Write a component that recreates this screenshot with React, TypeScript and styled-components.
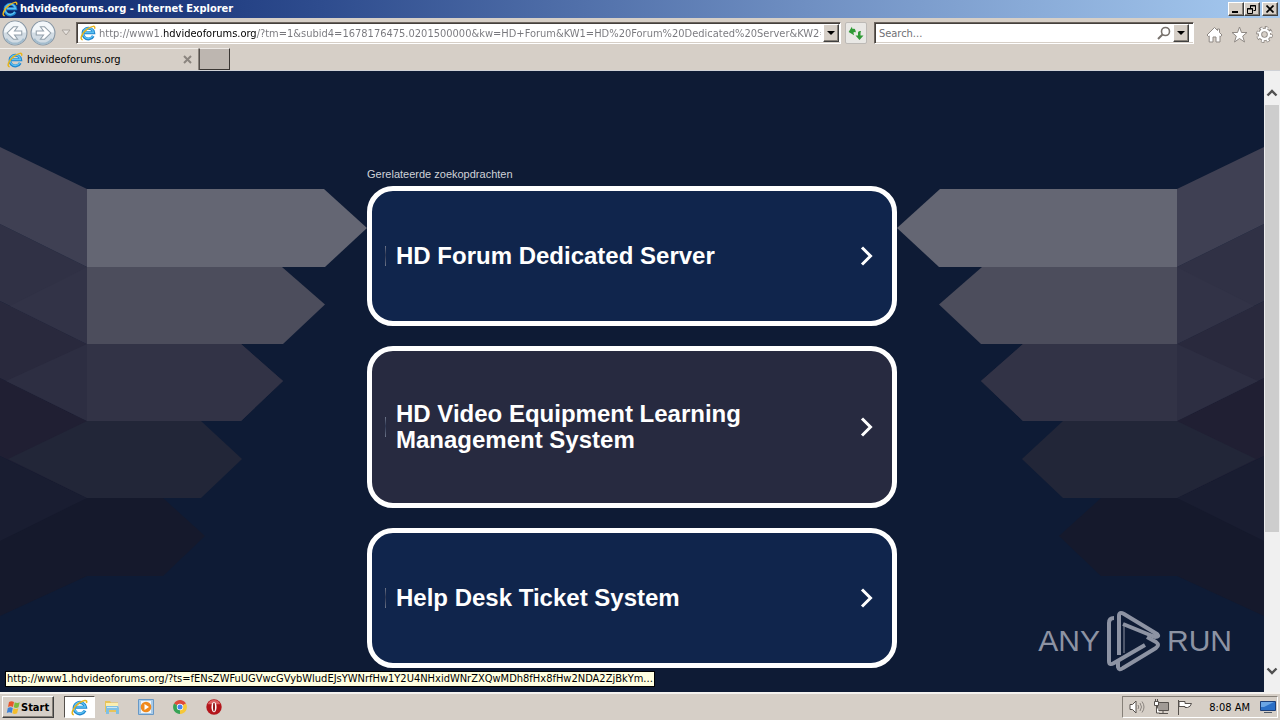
import React from "react";
import styled, { createGlobalStyle, css } from "styled-components";

const GlobalStyle = createGlobalStyle`
  * { box-sizing: border-box; }
  body {
    margin: 0;
    background: #0e1b35;
    font-family: "DejaVu Sans Condensed", "DejaVu Sans", sans-serif;
    font-size: 11px;
    color: #000;
  }
  button, input { font: inherit; margin: 0; padding: 0; border: 0; background: none; }
  svg { display: block; flex: none; }
`;

const raised = css`
  background: #d6cfc7;
  border: 1px solid;
  border-color: #fff #404040 #404040 #fff;
  box-shadow: inset -1px -1px 0 #868078;
`;

const Desktop = styled.div`
  display: flex;
  flex-direction: column;
  height: 100vh;
  overflow: hidden;
`;

const TitleBar = styled.header`
  display: flex;
  align-items: center;
  gap: 2px;
  height: 18px;
  flex: none;
  padding: 0 2px;
  color: #fff;
  font-weight: bold;
  background: linear-gradient(90deg, #0b256b, #2e4c8e 25%, #6f8fc2 63%, #a6caf0);
`;

const Title = styled.h1`
  flex: 1;
  margin: 0;
  font-size: 11px;
  line-height: 18px;
  white-space: nowrap;
`;

const WindowButtons = styled.div`
  display: flex;
`;

const WindowButton = styled.button<{ $apart?: boolean }>`
  ${raised}
  display: flex;
  align-items: center;
  justify-content: center;
  width: 16px;
  height: 14px;
  margin-left: ${(p) => (p.$apart ? 2 : 0)}px;
`;

const NavBar = styled.nav`
  display: flex;
  align-items: center;
  height: 30px;
  flex: none;
  padding: 0 7px 0 2px;
  background: #d6cfc7;
`;

const HistoryButtons = styled.div`
  display: flex;
  align-items: center;
  gap: 2px;
  width: 74px;
  flex: none;
`;

const PlainButton = styled.button`
  display: flex;
  align-items: center;
  justify-content: center;
`;

const Field = styled.div<{ $grow: number; $end?: number }>`
  display: flex;
  align-items: center;
  flex: ${(p) => p.$grow} 1 0;
  min-width: 0;
  height: 22px;
  padding: 0 ${(p) => p.$end ?? 1}px 0 3px;
  background: #fff;
  border: 1px solid;
  border-color: #6b645e #fff #fff #6b645e;
  box-shadow: inset 1px 1px 0 #45403c, inset 0 -1px 0 #d6cfc7;
`;

const AddressInput = styled.input`
  flex: 1;
  min-width: 0;
  height: 18px;
  margin-left: 3px;
  color: transparent;
  background: linear-gradient(90deg, #77777c 65px, #000 65px, #000 158px, #77777c 158px);
  -webkit-background-clip: text;
  background-clip: text;
  outline: none;
`;

const SearchInput = styled.input`
  flex: 1;
  min-width: 0;
  height: 18px;
  margin-left: 1px;
  color: #707074;
  outline: none;
  &::placeholder { color: #707074; opacity: 1; }
`;

const DropButton = styled.button`
  ${raised}
  display: flex;
  align-items: center;
  justify-content: center;
  flex: none;
  width: 16px;
  height: 18px;
  margin-left: 2px;
`;

const RefreshButton = styled.button`
  display: flex;
  align-items: center;
  justify-content: center;
  flex: none;
  width: 22px;
  height: 22px;
  margin: 0 7px 0 4px;
  background: #e9e8e5;
  border: 1px solid #bdbab6;
  border-radius: 2px;
`;

const Tools = styled.div`
  display: flex;
  gap: 8px;
  margin-left: 12px;
  padding-top: 2px;
`;

const TabStrip = styled.div`
  display: flex;
  height: 23px;
  flex: none;
  background: #d6cfc7;
  border-bottom: 1px solid #cfd1d6;
`;

const Tab = styled.div`
  display: flex;
  align-items: center;
  gap: 4px;
  width: 199px;
  padding: 0 6px 0 7px;
  border-right: 1px solid #8b847d;
  border-top: 1px solid #f1eeea;
`;

const TabTitle = styled.span`
  flex: 1;
`;

const NewTab = styled.button`
  width: 31px;
  height: 22px;
  background: #bdb6b0;
  border: 1px solid;
  border-color: #eeeae6 #3a3633 #3a3633 #55504c;
`;

const Viewport = styled.main`
  position: relative;
  display: flex;
  flex: 1;
  min-height: 0;
  background: #0e1b35;
`;

const Page = styled.div`
  display: grid;
  grid-template-columns: minmax(0, 1fr) 530px minmax(0, 1fr);
  flex: 1;
  min-width: 0;
  overflow: hidden;
`;

const Art = styled.svg`
  width: 100%;
  height: 621px;
`;

const Results = styled.section`
  display: flex;
  flex-direction: column;
  gap: 20px;
  padding-top: 96px;
  font-family: "Liberation Sans", Arial, sans-serif;
`;

const Caption = styled.p`
  margin: 0 0 -15px;
  color: #d0d2d8;
  font-size: 11px;
  line-height: 14px;
`;

const Card = styled.a<{ $hover?: boolean }>`
  display: flex;
  align-items: center;
  padding: 50px 18px 50px 13px;
  background: ${(p) => (p.$hover ? "#272a40" : "#10254c")};
  border: 5px solid #fff;
  border-radius: 26px;
  color: #fff;
  text-decoration: none;
`;

const Tick = styled.i`
  width: 1px;
  height: 20px;
  margin-right: 10px;
  background: linear-gradient(#6d7589, #2c3550 45%, #6d7589);
`;

const CardText = styled.span`
  display: flex;
  align-items: center;
  flex: 1;
  min-height: 30px;
  padding-right: 60px;
  font-size: 24px;
  font-weight: bold;
  line-height: 26px;
`;

const Scrollbar = styled.div`
  display: flex;
  flex-direction: column;
  justify-content: space-between;
  width: 16px;
  flex: none;
  padding-top: 14px;
  background: #f0f0f0;
`;

const Thumb = styled.div`
  flex: 0 1 427px;
  margin: 4px 1px auto;
  background: #cdcdcd;
`;

const ScrollButton = styled(PlainButton)`
  width: 16px;
  height: 16px;
  flex: none;
  &:last-child { height: 42px; }
`;

const StatusTip = styled.output`
  position: absolute;
  left: 5px;
  bottom: 5px;
  height: 16px;
  padding: 0 1px;
  line-height: 14px;
  white-space: nowrap;
  background: #ffffe1;
  border: 1px solid #000;
`;

const Watermark = styled.div`
  position: absolute;
  right: 48px;
  bottom: 18px;
  display: flex;
  align-items: center;
  gap: 6px;
  color: #8d93a3;
  font-family: "Liberation Sans", sans-serif;
  font-size: 30px;
  line-height: 66px;
`;

const Taskbar = styled.footer`
  display: flex;
  align-items: center;
  gap: 10px;
  height: 28px;
  flex: none;
  padding: 0 2px;
  background: #d6cfc7;
  border-top: 2px solid #f4f2ef;
`;

const StartButton = styled.button`
  ${raised}
  display: flex;
  align-items: center;
  width: 52px;
  height: 22px;
  padding: 0 3px;
  font-weight: bold;
`;

const Launchers = styled.div`
  display: flex;
  flex: 1;
`;

const Launcher = styled.button<{ $active?: boolean }>`
  display: flex;
  align-items: center;
  justify-content: center;
  width: ${(p) => (p.$active ? 31 : 34)}px;
  height: 22px;
  ${(p) =>
    p.$active &&
    css`
      background: #fff;
      border: 1px solid;
      border-color: #55504c #fff #fff #55504c;
    `}
`;

const Tray = styled.div`
  display: flex;
  align-items: center;
  gap: 8px;
  height: 22px;
  padding: 0 1px 0 6px;
  border: 1px solid;
  border-color: #868078 #fff #fff #868078;
`;

const Clock = styled.time`
  margin: 0 2px 0 8px;
`;

const IELogo = ({ size = 16 }: { size?: number }) => (
  <svg width={size} height={size} viewBox="0 0 16 16" fill="none">
    <path d="M13.2 11a5.4 5.4 0 1 1 .5-3.2H4.6" stroke="#1f86cf" strokeWidth="2.9" />
    <path d="M12.9 10.8a5.2 5.2 0 1 1 .6-3.3H5" stroke="#5cc2f2" strokeWidth="1.3" />
    <path d="M2.7 14.8C-.8 14.6 2 8 7.200 4.200 11.500.9 16 .1 14.500 3.800" stroke="#e8b51c" strokeWidth="1.500" />
  </svg>
);

const RoundArrow = ({ flip }: { flip?: boolean }) => (
  <svg width="26" height="26" viewBox="0 0 25 25" fill="none">
    <circle cx="12.500" cy="12.500" r="11.500" fill="#d2dce4" stroke="#8796a4" />
    <path d="M2 12a10.500 10.500 0 0 1 21 0z" fill="#f3f7fa" />
    <path d="M4 18a10 10 0 0 0 17 0" stroke="#a3bccd" strokeWidth="2" />
    <g transform={flip ? "matrix(-1 0 0 1 25 0)" : undefined}>
      <path d="M19 10.500h-7l3-4h-4l-6 6 6 6h4l-3-4h7z" fill="#fff" stroke="#93a0ab" />
    </g>
  </svg>
);

const DownTriangle = () => (
  <svg width="8" height="4" viewBox="0 0 8 4">
    <path d="M0 0h8L4 4z" fill="#000" />
  </svg>
);

const CardChevron = () => (
  <svg width="14" height="20" viewBox="0 0 14 20" fill="none">
    <path d="M2 1.500l8.500 8.500L2 18.500" stroke="#fff" strokeWidth="3" />
  </svg>
);

const ScrollArrow = ({ down }: { down?: boolean }) => (
  <svg width="12" height="8" viewBox="0 0 12 8" fill="none">
    <path d={down ? "M1.500 1.500L6 6l4.500-4.500" : "M1.500 6.500L6 2l4.500 4.500"} stroke="#505050" strokeWidth="2.400" />
  </svg>
);

const ArrowArt = ({ mirrored }: { mirrored?: boolean }) => (
  <Art viewBox="0 71 367 621" preserveAspectRatio={mirrored ? "xMinYMin slice" : "xMaxYMin slice"} aria-hidden="true">
    <g transform={mirrored ? "matrix(-1 0 0 1 367 0)" : undefined}>
      <path d="M0 498H163L205 536 163 576H87L0 616z" fill="#15192c" />
      <path d="M0 456L87 498 0 541z" fill="#191d31" />
      <path d="M0 378L87 421V498L0 456z" fill="#201f33" />
      <path d="M87 421H201L242 459 201 498H87L8 459z" fill="#222638" />
      <path d="M0 301L87 344V421L0 378z" fill="#29293d" />
      <path d="M87 344H241L283 381 241 421H87L6 381z" fill="#2d2e42" />
      <path d="M87 344H241L283 381 241 421H87z" fill="#323346" />
      <path d="M0 224L87 267V344L0 301z" fill="#303145" />
      <path d="M87 267V344L10 306z" fill="#323347" />
      <path d="M87 267H282L325 304.500 283 344H87z" fill="#4c4d5c" />
      <path d="M0 147L87 189V267L0 224z" fill="#3f4053" />
      <path d="M87 189H324L367 228 325 267H87z" fill="#646673" />
    </g>
  </Art>
);

const AnyRunMark = () => (
  <svg width="55" height="62" viewBox="0 0 55 62" fill="none" stroke="#8d93a3" strokeWidth="4" strokeLinejoin="round">
    <path d="M8 8Q3 8 3 13V51Q3 56 8 53L39 35" />
    <path d="M13 45V6Q13 1 18 4L51 24Q54 27 49 27L17 14" />
    <path d="M18 16V43" strokeWidth="1" />
    <path d="M12 52V57Q13 61 17 58L50 38Q54 35 50 32L41 27" />
  </svg>
);

const RESULTS = [
  { text: "HD Forum Dedicated Server" },
  { text: "HD Video Equipment Learning Management System", hover: true },
  { text: "Help Desk Ticket System" },
];

export default function App() {
  return (
    <Desktop>
      <GlobalStyle />
      <TitleBar>
        <IELogo />
        <Title>hdvideoforums.org - Internet Explorer</Title>
        <WindowButtons>
          <WindowButton aria-label="Minimize">
            <svg width="10" height="8"><path d="M1 6h6v2H1z" /></svg>
          </WindowButton>
          <WindowButton aria-label="Restore">
            <svg width="10" height="9" fill="none" stroke="#000"><path d="M3.500 3V.5h5v5H6.500M3 1h6M.5 3.500h5v5h-5zM0 4h6" /></svg>
          </WindowButton>
          <WindowButton $apart aria-label="Close">
            <svg width="8" height="8" stroke="#000" strokeWidth="1.700"><path d="M.5.5l7 7M7.500.5l-7 7" /></svg>
          </WindowButton>
        </WindowButtons>
      </TitleBar>

      <NavBar>
        <HistoryButtons>
          <PlainButton aria-label="Back"><RoundArrow /></PlainButton>
          <PlainButton aria-label="Forward"><RoundArrow flip /></PlainButton>
          <PlainButton aria-label="Recent pages">
            <svg width="16" height="8" viewBox="0 0 16 8"><path d="M4 1h8L8 6z" fill="#e6e2de" stroke="#aaa49e" /></svg>
          </PlainButton>
        </HistoryButtons>
        <Field $grow={761}>
          <IELogo />
          <AddressInput
            aria-label="Address"
            defaultValue="http://www1.hdvideoforums.org/?tm=1&subid4=1678176475.0201500000&kw=HD+Forum&KW1=HD%20Forum%20Dedicated%20Server&KW2=HD"
          />
          <DropButton aria-label="Show addresses"><DownTriangle /></DropButton>
        </Field>
        <RefreshButton aria-label="Refresh">
          <svg width="16" height="16" viewBox="0 0 16 16" fill="#2f9a35">
            <path d="M5 1.500L.5 6 5 10.500V7.500h1.500Q7.500 7.500 7.500 9V5.500Q7.500 4 6 4H5z" transform="rotate(-14 5 6)" />
            <path d="M11.500 15L7.500 10.500H10V7.500Q10 6 12 6h1Q12.500 7 12.500 8.500v2h3z" />
          </svg>
        </RefreshButton>
        <Field $grow={312} $end={4}>
          <SearchInput aria-label="Search" placeholder="Search..." />
          <svg width="14" height="14" viewBox="0 0 14 14" fill="none" stroke="#77716c">
            <circle cx="8.500" cy="5.500" r="4" strokeWidth="1.600" /><path d="M5.500 8.500L1 13" strokeWidth="2" />
          </svg>
          <DropButton aria-label="Search providers"><DownTriangle /></DropButton>
        </Field>
        <Tools>
          <PlainButton aria-label="Home">
            <svg width="17" height="17" viewBox="0 0 17 17" fill="#fff" stroke="#8f8984">
              <path d="M8.500 1.500L1 9l1.500 1.500.7-.6V16H7v-5h3v5h4V9.900l.6.6L16 9l-2.500-2.500V3h-2v1.500z" />
            </svg>
          </PlainButton>
          <PlainButton aria-label="Favorites">
            <svg width="17" height="17" viewBox="0 0 17 17" fill="#fff" stroke="#8f8984">
              <path d="M8.500 1l2 5.500H16l-4.300 3.600L13.500 16l-5-3.500-5 3.500 1.800-5.900L1 6.500h5.500z" />
            </svg>
          </PlainButton>
          <PlainButton aria-label="Tools">
            <svg width="17" height="17" viewBox="0 0 17 17" fill="none">
              <circle cx="8.500" cy="8.500" r="6.700" stroke="#8f8984" strokeWidth="3.400" strokeDasharray="3.200 2.062" />
              <circle cx="8.500" cy="8.500" r="4.500" stroke="#8f8984" strokeWidth="4.200" />
              <circle cx="8.500" cy="8.500" r="6.300" stroke="#fff" strokeWidth="2.600" strokeDasharray="1.900 3.048" strokeDashoffset="-.5" />
              <circle cx="8.500" cy="8.500" r="4.500" stroke="#fff" strokeWidth="2.400" />
            </svg>
          </PlainButton>
        </Tools>
      </NavBar>

      <TabStrip>
        <Tab>
          <IELogo />
          <TabTitle>hdvideoforums.org</TabTitle>
          <PlainButton aria-label="Close tab">
            <svg width="9" height="9" stroke="#8b857f" strokeWidth="2"><path d="M1 1l7 7M8 1l-7 7" /></svg>
          </PlainButton>
        </Tab>
        <NewTab aria-label="New tab" />
      </TabStrip>

      <Viewport>
        <Page>
          <ArrowArt />
          <Results>
            <Caption>Gerelateerde zoekopdrachten</Caption>
            {RESULTS.map((r) => (
              <Card key={r.text} href="#" $hover={r.hover}>
                <Tick />
                <CardText>{r.text}</CardText>
                <CardChevron />
              </Card>
            ))}
          </Results>
          <ArrowArt mirrored />
        </Page>
        <Scrollbar>
          <ScrollButton aria-label="Scroll up"><ScrollArrow /></ScrollButton>
          <Thumb />
          <ScrollButton aria-label="Scroll down"><ScrollArrow down /></ScrollButton>
        </Scrollbar>
        <StatusTip>http://www1.hdvideoforums.org/?ts=fENsZWFuUGVwcGVybWludEJsYWNrfHw1Y2U4NHxidWNrZXQwMDh8fHx8fHw2NDA2ZjBkYm...</StatusTip>
        <Watermark>
          <span>ANY</span>
          <AnyRunMark />
          <span>RUN</span>
        </Watermark>
      </Viewport>

      <Taskbar>
        <StartButton>
          <svg width="15" height="15" viewBox="0 0 15 15">
            <path d="M3 2q2.500-1.500 5 0L7 7Q4.500 5.500 2 7z" fill="#e8562a" />
            <path d="M8.700 2.300q2.500 1.500 5 0l-1.200 5q-2.500 1.500-4.700 0z" fill="#7dbb3c" />
            <path d="M1.800 8q2.500-1.500 5 0l-1 5q-2.500-1.500-5 0z" fill="#3e82d6" />
            <path d="M7.500 8.300q2.500 1.500 4.800 0l-1.200 5q-2.500 1.500-4.700 0z" fill="#f4bd2a" />
          </svg>
          Start
        </StartButton>
        <Launchers>
          <Launcher $active aria-label="Internet Explorer"><IELogo size={17} /></Launcher>
          <Launcher aria-label="Explorer">
            <svg width="16" height="16" viewBox="0 0 16 16">
              <path d="M1 2h5l1 1.500h7V13H1z" fill="#e7c35a" /><path d="M2 4h12v6H2z" fill="#fbeeb0" />
              <path d="M2 7h12l1 2v6h-3v-4H5v4H2z" fill="#7fc0e4" /><path d="M3 8h10v1H3z" fill="#c9e8f6" />
            </svg>
          </Launcher>
          <Launcher aria-label="Media Player">
            <svg width="16" height="16" viewBox="0 0 16 16">
              <path d="M.5.5h15v15H.5z" fill="#a9cbe8" stroke="#6798c6" /><path d="M3 2h10v12H3z" fill="#f0f6fb" />
              <circle cx="8" cy="8" r="5.300" fill="#f08a1d" /><path d="M6.500 5l4.500 3-4.500 3z" fill="#fff" />
            </svg>
          </Launcher>
          <Launcher aria-label="Chrome">
            <svg width="14" height="14" viewBox="0 0 14 14">
              <path d="M7 7L1 3.500A7 7 0 0 1 13 3.500z" fill="#df4a3a" />
              <path d="M7 7L1 3.500A7 7 0 0 0 7 14l3-5z" fill="#37a355" />
              <path d="M7 7l6-3.500A7 7 0 0 1 7 14z" fill="#f6c838" />
              <circle cx="7" cy="7" r="3.200" fill="#fff" /><circle cx="7" cy="7" r="2.500" fill="#4484ee" />
            </svg>
          </Launcher>
          <Launcher aria-label="Opera">
            <svg width="16" height="16" viewBox="0 0 15 15">
              <circle cx="7.500" cy="7.500" r="7.200" fill="#b3151b" /><path d="M1.500 5a6.500 6.500 0 0 1 12 0z" fill="#dc6062" />
              <ellipse cx="7.500" cy="7.500" rx="2.400" ry="5" fill="#fff" /><ellipse cx="7.500" cy="7.500" rx=".9" ry="4.200" fill="#8c0d12" />
            </svg>
          </Launcher>
        </Launchers>
        <Tray>
          <svg width="16" height="14" viewBox="0 0 16 14" fill="none" stroke="#56514d">
            <path d="M1 4.500h2.500L7 1v12L3.500 9.500H1z" fill="#fff" /><path d="M9 5q1.500 2 0 4M11 3q3 4 0 8M13 1.500q4 5.500 0 11" stroke="#8b8580" />
          </svg>
          <svg width="16" height="16" viewBox="0 0 16 16" fill="none" stroke="#56514d">
            <path d="M4.500 3.500h11v8h-11z" fill="#a09a95" /><path d="M6 14.500h9M10 12v2" />
            <path d="M1.500 2.500h4v4h-4zM2.500 0v2M4.500 0v2M3.500 7v7h3" fill="#fff" />
          </svg>
          <svg width="16" height="15" viewBox="0 0 16 15" fill="#fff" stroke="#56514d">
            <path d="M1.500 0v15M2 1.500h6v2h6.500q-1 3.500-4 4H8v-1H2z" />
          </svg>
          <Clock>8:08 AM</Clock>
          <svg width="16" height="14" viewBox="0 0 16 14">
            <path d="M.5 1.500h15v9H.5z" fill="#2b6fc6" stroke="#1c3e78" /><path d="M1 2h13L4 7H1z" fill="#6ba5e4" /><path d="M4 12h8v1H4z" fill="#4c5664" />
          </svg>
        </Tray>
      </Taskbar>
    </Desktop>
  );
}
